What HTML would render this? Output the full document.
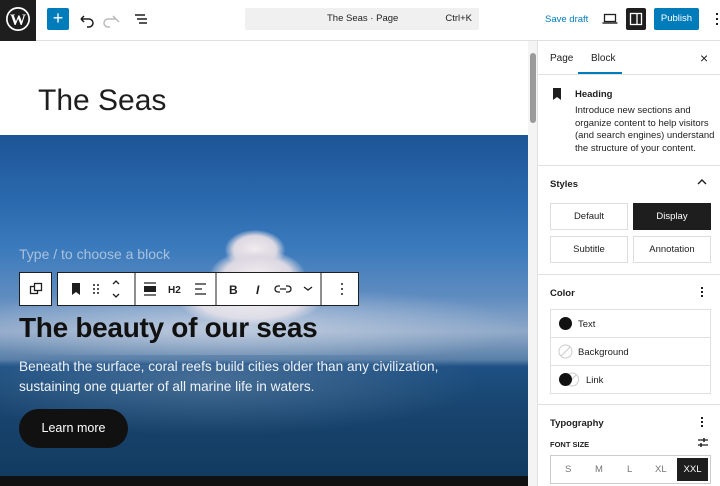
<!DOCTYPE html>
<html><head><meta charset="utf-8"><style>
*{box-sizing:border-box;margin:0;padding:0}
body{width:720px;height:486px;overflow:hidden;font-family:"Liberation Sans",sans-serif;background:#fff;position:relative;color:#1e1e1e}
.top{position:absolute;left:0;top:0;width:720px;height:41px;border-bottom:1px solid #e0e0e0;background:#fff}
.wp{position:absolute;left:0;top:0;width:36px;height:41px;background:#1e1e1e}
.abs{position:absolute}
.canvas{position:absolute;left:0;top:41px;width:528px;height:445px;background:#fff;overflow:hidden}
.cover{position:absolute;left:0;top:94px;width:528px;height:351px;overflow:hidden;
background:linear-gradient(180deg,#1d5596 0%,#2a68ad 18%,#3a7abc 32%,#5f8cc0 46%,#8ea8c8 56%,#5a80a8 64%,#1e5084 66%,#1a4a78 72%,#17426b 82%,#123a5e 100%)}
.sb{position:absolute;left:528px;top:41px;width:10px;height:445px;background:#f4f4f4;border-right:1px solid #e0e0e0}
.side{position:absolute;left:538px;top:41px;width:182px;height:445px;background:#fff;font-size:10px}
.hr{position:absolute;left:0;width:182px;height:1px;background:#e0e0e0}
.btn{position:absolute;height:27px;border:1px solid #ddd;font-size:9.5px;text-align:center;line-height:25px;color:#1e1e1e}
.tb{position:absolute;top:272px;height:34px;background:#fff;border:1px solid #1e1e1e}
.cl{position:absolute;border-radius:50%;background:radial-gradient(#f2ecef,#dcd8e2 50%,rgba(200,205,220,0) 72%)}
</style></head><body>
<div class="top">
 <div class="wp"><svg width="36" height="41" viewBox="0 0 36 41"><circle cx="18" cy="19" r="12" fill="#fff"/><circle cx="18" cy="19" r="10.3" fill="#1e1e1e"/><text x="18" y="25" font-family="Liberation Serif" font-weight="bold" font-size="16" fill="#fff" text-anchor="middle">W</text></svg></div>
 <div class="abs" style="left:47px;top:8px;width:22px;height:22px;background:#007cba;border-radius:2px;color:#fff;font-size:18px;line-height:21px;text-align:center">+</div>
 <svg class="abs" style="left:76px;top:10px" width="80" height="20"><path d="M5 9h8a4 4 0 0 1 0 8h-2M5 9l3-3M5 9l3 3" stroke="#1e1e1e" stroke-width="1.5" fill="none"/><path d="M43 9h-8a4 4 0 0 0 0 8h2M43 9l-3-3M43 9l3 3" stroke="#bbb" stroke-width="1.5" fill="none" transform="translate(-3 0)"/><path d="M59 5h10M61 9h10M63 13h8" stroke="#1e1e1e" stroke-width="1.5"/></svg>
 <div class="abs" style="left:245px;top:8px;width:234px;height:22px;background:#f0f0f0;border-radius:2px;font-size:9.5px;line-height:22px"><span style="position:absolute;left:82px">The Seas · Page</span><span style="position:absolute;right:7px">Ctrl+K</span></div>
 <div class="abs" style="left:545px;top:14px;font-size:9.5px;color:#007cba">Save draft</div>
 <svg class="abs" style="left:602px;top:12px" width="16" height="14"><rect x="2.5" y="2.5" width="11" height="7" fill="none" stroke="#1e1e1e" stroke-width="1.3"/><path d="M0.5 11h15" stroke="#1e1e1e" stroke-width="1.4"/></svg>
 <div class="abs" style="left:626px;top:8px;width:20px;height:22px;background:#1e1e1e;border-radius:2px"><svg width="20" height="22"><rect x="4.5" y="5.5" width="11" height="11" fill="none" stroke="#fff" stroke-width="1.3"/><path d="M11 6v10" stroke="#fff" stroke-width="1.3"/></svg></div>
 <div class="abs" style="left:654px;top:8px;width:45px;height:22px;background:#007cba;border-radius:2px;color:#fff;font-size:9.5px;line-height:22px;text-align:center">Publish</div>
 <div class="abs" style="left:716px;top:13px;width:2px;height:2px;background:#1e1e1e;box-shadow:0 5px #1e1e1e,0 10px #1e1e1e"></div>
</div>
<div class="canvas">
 <div class="abs" style="left:38px;top:43px;font-size:30px;color:#1e1e1e">The Seas</div>
 <div class="cover">
  <div class="cl" style="left:225px;top:95px;width:60px;height:40px"></div>
  <div class="cl" style="left:210px;top:115px;width:95px;height:50px"></div>
  <div class="cl" style="left:180px;top:145px;width:140px;height:45px"></div>
  <div class="abs" style="left:0;top:150px;width:528px;height:70px;background:radial-gradient(ellipse at 45% 60%,rgba(225,228,238,.6),rgba(150,170,200,0) 70%)"></div>
  <div class="abs" style="left:0;top:230px;width:528px;height:80px;background:radial-gradient(ellipse at 40% 20%,rgba(120,150,180,.45),rgba(0,0,0,0) 60%)"></div>
  <div class="abs" style="left:0;top:341px;width:528px;height:10px;background:#111"></div>
 </div>
 <div class="abs" style="left:19px;top:205px;font-size:14px;color:#a9c1dd">Type / to choose a block</div>
 <div class="abs" style="left:19px;top:271px;font-size:28px;font-weight:bold;color:#111;letter-spacing:-.3px">The beauty of our seas</div>
 <div class="abs" style="left:19px;top:316px;font-size:13.6px;line-height:20px;color:#eef2f6">Beneath the surface, coral reefs build cities older than any civilization,<br>sustaining one quarter of all marine life in waters.</div>
 <div class="abs" style="left:19px;top:368px;width:109px;height:39px;border-radius:20px;background:#111;color:#fff;font-size:12.5px;line-height:39px;text-align:center">Learn more</div>
</div>
<div class="tb" style="left:19px;width:33px"><svg width="31" height="32"><rect x="10.5" y="13.5" width="7" height="7" fill="none" stroke="#1e1e1e" stroke-width="1.3"/><rect x="14.5" y="10.5" width="7" height="7" fill="#fff" stroke="#1e1e1e" stroke-width="1.3"/></svg></div>
<div class="tb" style="left:57px;width:302px;font-size:10px;font-weight:bold">
 <svg width="300" height="32">
  <path d="M14 10h8v12l-4-3-4 3z" fill="#1e1e1e"/>
  <g fill="#1e1e1e"><circle cx="36" cy="12" r="1"/><circle cx="40" cy="12" r="1"/><circle cx="36" cy="16" r="1"/><circle cx="40" cy="16" r="1"/><circle cx="36" cy="20" r="1"/><circle cx="40" cy="20" r="1"/></g>
  <path d="M55 11l3-3 3 3M55 21l3 3 3-3" stroke="#1e1e1e" stroke-width="1.3" fill="none"/>
  <path d="M77 0v34" stroke="#1e1e1e"/>
  <path d="M86 10h12M86 22h12" stroke="#1e1e1e" stroke-width="1.3"/><rect x="86" y="13" width="12" height="6" fill="#1e1e1e"/>
  <text x="110" y="20" font-family="Liberation Sans" font-weight="bold" font-size="10" fill="#1e1e1e">H2</text>
  <path d="M137 11h11M137 16h7M137 21h11" stroke="#1e1e1e" stroke-width="1.3"/>
  <path d="M158 0v34" stroke="#1e1e1e"/>
  <text x="171" y="21" font-family="Liberation Sans" font-weight="bold" font-size="12" fill="#1e1e1e">B</text>
  <text x="198" y="21" font-family="Liberation Sans" font-style="italic" font-size="12" fill="#1e1e1e">I</text>
  <path d="M222 13h-2a3 3 0 0 0 0 6h2M228 13h2a3 3 0 0 1 0 6h-2M222 16h6" stroke="#1e1e1e" stroke-width="1.3" fill="none"/>
  <path d="M246 14l4 3 4-3" stroke="#1e1e1e" stroke-width="1.3" fill="none"/>
  <path d="M263 0v34" stroke="#1e1e1e"/>
  <g fill="#1e1e1e"><circle cx="284" cy="11" r="1"/><circle cx="284" cy="16" r="1"/><circle cx="284" cy="21" r="1"/></g>
 </svg>
</div>
<div class="sb"><div class="abs" style="left:2px;top:12px;width:6px;height:70px;background:#9a9a9a;border-radius:3px"></div></div>
<div class="side">
 <div class="abs" style="left:12px;top:12px">Page</div>
 <div class="abs" style="left:53px;top:12px">Block</div>
 <div class="abs" style="left:40px;top:31px;width:44px;height:2px;background:#007cba"></div>
 <div class="abs" style="left:162px;top:9px;font-size:14px">×</div>
 <div class="hr" style="top:33px"></div>
 <svg class="abs" style="left:14px;top:47px" width="10" height="12"><path d="M1 0h8v12l-4-3-4 3z" fill="#1e1e1e"/></svg>
 <div class="abs" style="left:37px;top:48px;font-weight:bold;font-size:9.5px">Heading</div>
 <div class="abs" style="left:37px;top:64px;font-size:9.5px;line-height:12.5px;width:140px">Introduce new sections and organize content to help visitors (and search engines) understand the structure of your content.</div>
 <div class="hr" style="top:124px"></div>
 <div class="abs" style="left:12px;top:138px;font-weight:bold;font-size:9.5px">Styles</div>
 <svg class="abs" style="left:159px;top:137px" width="10" height="8"><path d="M1 6l4-4 4 4" stroke="#1e1e1e" stroke-width="1.4" fill="none"/></svg>
 <div class="btn" style="left:12px;top:162px;width:78px">Default</div>
 <div class="btn" style="left:95px;top:162px;width:78px;background:#1e1e1e;color:#fff;border-color:#1e1e1e">Display</div>
 <div class="btn" style="left:12px;top:195px;width:78px">Subtitle</div>
 <div class="btn" style="left:95px;top:195px;width:78px">Annotation</div>
 <div class="hr" style="top:233px"></div>
 <div class="abs" style="left:12px;top:247px;font-weight:bold;font-size:9.5px">Color</div>
 <div class="abs" style="left:163px;top:246px;width:2px;height:2px;background:#1e1e1e;box-shadow:0 4px #1e1e1e,0 8px #1e1e1e"></div>
 <div class="abs" style="left:12px;top:268px;width:161px;height:85px;border:1px solid #e0e0e0"></div>
 <div class="abs" style="left:12px;top:296px;width:161px;height:1px;background:#e0e0e0"></div>
 <div class="abs" style="left:12px;top:324px;width:161px;height:1px;background:#e0e0e0"></div>
 <div class="abs" style="left:21px;top:276px;width:13px;height:13px;border-radius:50%;background:#111"></div>
 <div class="abs" style="left:40px;top:278px;font-size:9.5px">Text</div>
 <svg class="abs" style="left:20px;top:303px" width="15" height="15"><circle cx="7.5" cy="7.5" r="6.5" fill="none" stroke="#ccc"/><path d="M3 12L12 3" stroke="#ccc"/></svg>
 <div class="abs" style="left:40px;top:306px;font-size:9.5px">Background</div>
 <svg class="abs" style="left:20px;top:331px" width="26" height="15"><circle cx="14" cy="7.5" r="6.5" fill="#fff" stroke="#ccc"/><path d="M10 12L18 3" stroke="#ccc"/><circle cx="7.5" cy="7.5" r="6.5" fill="#111"/></svg>
 <div class="abs" style="left:48px;top:334px;font-size:9.5px">Link</div>
 <div class="hr" style="top:363px"></div>
 <div class="abs" style="left:12px;top:377px;font-weight:bold;font-size:9.5px">Typography</div>
 <div class="abs" style="left:163px;top:376px;width:2px;height:2px;background:#1e1e1e;box-shadow:0 4px #1e1e1e,0 8px #1e1e1e"></div>
 <div class="abs" style="left:12px;top:399px;font-weight:bold;font-size:7.5px">FONT SIZE</div>
 <svg class="abs" style="left:159px;top:396px" width="12" height="11"><path d="M1 3h10M1 8h10" stroke="#1e1e1e" stroke-width="1.3"/><path d="M7 1v4M4 6v4" stroke="#1e1e1e" stroke-width="1.5"/></svg>
 <div class="abs" style="left:12px;top:414px;width:161px;height:29px;border:1px solid #ccc"></div>
 <div class="abs" style="left:27px;top:423px;font-size:9.5px;color:#757575">S</div>
 <div class="abs" style="left:57px;top:423px;font-size:9.5px;color:#757575">M</div>
 <div class="abs" style="left:89px;top:423px;font-size:9.5px;color:#757575">L</div>
 <div class="abs" style="left:117px;top:423px;font-size:9.5px;color:#757575">XL</div>
 <div class="abs" style="left:139px;top:417px;width:31px;height:23px;background:#1e1e1e;color:#fff;font-size:9.5px;line-height:23px;text-align:center">XXL</div>
</div>
</body></html>
